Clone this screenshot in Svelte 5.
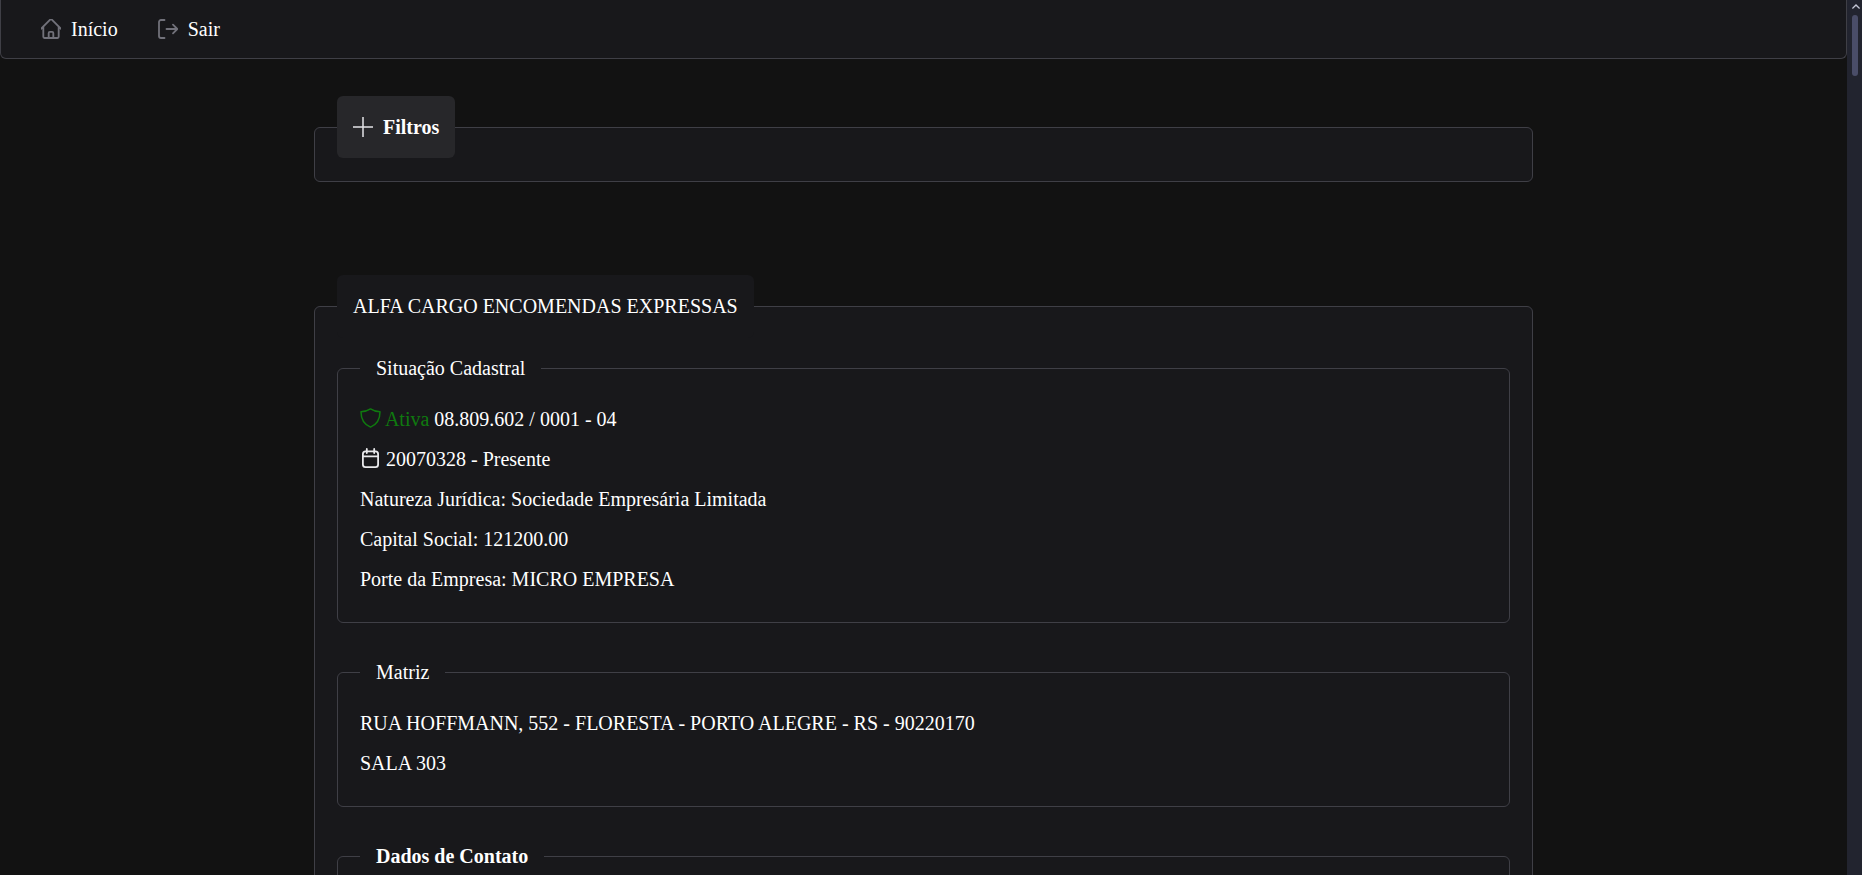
<script>
  const situacao = [
    'Natureza Jurídica: Sociedade Empresária Limitada',
    'Capital Social: 121200.00',
    'Porte da Empresa: MICRO EMPRESA'
  ];
</script>

<div class="page">
  <div class="view">
    <nav class="menubar">
      <a class="item" href="#inicio">
        <svg class="nav-icon" viewBox="2.25 2.700 19.500 19" fill="none" stroke="currentColor" stroke-width="1.800" stroke-linecap="round" stroke-linejoin="round"><path d="M2.25 12l8.954-8.955c.44-.439 1.152-.439 1.591 0L21.75 12M4.500 9.750v10.125c0 .621.504 1.125 1.125 1.125H9.750v-4.875c0-.621.504-1.125 1.125-1.125h2.250c.621 0 1.125.504 1.125 1.125V21h4.125c.621 0 1.125-.504 1.125-1.125V9.750M8.250 21h8.250"/></svg>
        <span>Início</span>
      </a>
      <a class="item" href="#sair">
        <svg class="nav-icon" viewBox="0 0 20 20" fill="none" stroke="currentColor" stroke-width="1.800" stroke-linecap="round" stroke-linejoin="round"><path d="M6.500 1H3a2 2 0 0 0-2 2v14a2 2 0 0 0 2 2h3.500M8.500 10H19.300M15 5.700l4.300 4.300-4.300 4.300"/></svg>
        <span>Sair</span>
      </a>
    </nav>

    <main class="content">
      <fieldset class="panel filters">
        <legend class="toggle">
          <svg class="plus" viewBox="0 0 20 20" fill="none" stroke="currentColor" stroke-width="1.500"><path d="M10 0v20M0 10h20"/></svg>
          <span class="toggle-label">Filtros</span>
        </legend>
      </fieldset>

      <fieldset class="panel company">
        <legend class="title">ALFA CARGO ENCOMENDAS EXPRESSAS</legend>

        <fieldset class="panel inner">
          <legend>Situação Cadastral</legend>
          <p>
            <svg class="row-icon shield" viewBox="0 0 21 20" fill="none" stroke="currentColor" stroke-width="1.500" stroke-linejoin="round"><path d="M10.500 .9c2.900 1.900 6 2.800 9.500 2.800 0 7.300-2.800 12.600-9.500 15.400C3.800 16.300 1 11 1 3.700 4.500 3.700 7.600 2.800 10.500 .9z"/></svg>
            <span class="ativa">Ativa</span> 08.809.602 / 0001 - 04
          </p>
          <p>
            <svg class="row-icon calendar" viewBox="0 0 21 20" fill="none" stroke="currentColor" stroke-width="1.800" stroke-linecap="round" stroke-linejoin="round"><rect x="2.900" y="3.400" width="15.200" height="15.700" rx="2.600"/><path d="M2.900 8.400h15.200M6.800 1v4M14.200 1v4"/></svg>
            20070328 - Presente
          </p>
          {#each situacao as line}
            <p>{line}</p>
          {/each}
        </fieldset>

        <fieldset class="panel inner">
          <legend>Matriz</legend>
          <p>RUA HOFFMANN, 552 - FLORESTA - PORTO ALEGRE - RS - 90220170</p>
          <p>SALA 303</p>
        </fieldset>

        <fieldset class="panel inner contact">
          <legend class="bold">Dados de Contato</legend>
        </fieldset>
      </fieldset>
    </main>
  </div>

  <aside class="scrollbar" aria-hidden="true">
    <svg class="arrow" viewBox="0 0 10 6"><path d="M5 0l5 5-1 1-4-3.500L1 6 0 5z" fill="#c3c6d6"/></svg>
    <div class="thumb"></div>
  </aside>
</div>

<style>
  :global(body) {
    margin: 0;
    background: #121212;
    color: #fff;
    font-family: "Liberation Serif", "Times New Roman", serif;
    font-size: 20px;
  }
  .page {
    display: flex;
    height: 875px;
    overflow: hidden;
  }
  .view {
    flex: 1;
    min-width: 0;
  }
  .menubar {
    display: flex;
    align-items: center;
    gap: 8px;
    box-sizing: border-box;
    width: 1847px;
    height: 59px;
    padding: 0 24px;
    background: #18181b;
    border: 1px solid #3f3f46;
    border-top: 0;
    border-radius: 0 0 6px 6px;
  }
  .item {
    display: flex;
    align-items: center;
    gap: 10px;
    padding: 12px 16px;
    color: #fff;
    text-decoration: none;
  }
  .nav-icon {
    display: block;
    width: 20px;
    height: 20px;
    color: #71717a;
  }
  .content {
    width: 1219px;
    margin-left: 314px;
  }
  .panel {
    margin: 0;
    min-width: 0;
    background: #18181b;
    border: 1px solid #3f3f46;
    border-radius: 6px;
    padding: 0 22px;
  }
  .filters {
    margin-top: 37px;
    height: 86px;
    box-sizing: border-box;
  }
  .toggle {
    display: flex;
    align-items: center;
    gap: 10px;
    box-sizing: border-box;
    height: 62px;
    padding: 0 16px;
    background: #27272a;
    border-radius: 6px;
    font-weight: 700;
  }
  .toggle-label {
    padding-top: 1px;
  }
  .plus {
    width: 20px;
    height: 20px;
    color: #e4e4e7;
  }
  .company {
    margin-top: 93px;
    padding-bottom: 40px;
  }
  .title {
    box-sizing: border-box;
    height: 63px;
    padding: 0 16px;
    background: #18181b;
    border-radius: 6px;
    line-height: 63px;
  }
  .inner {
    margin-top: 38px;
    padding-top: 28px;
    padding-bottom: 14px;
  }
  .title + .inner {
    margin-top: 19px;
  }
  .contact {
    min-height: 120px;
  }
  .inner legend {
    padding: 0 16px;
    line-height: 23px;
  }
  .inner .bold {
    font-weight: 700;
  }
  p {
    margin: 0 0 17px;
    line-height: 23px;
  }
  .ativa {
    color: #0f7a0f;
  }
  .row-icon {
    width: 21px;
    height: 20px;
    vertical-align: -2px;
  }
  .shield {
    color: #0f7a0f;
  }
  .calendar {
    color: #e9e9ec;
  }
  .scrollbar {
    position: relative;
    flex: none;
    width: 15px;
    background: #22242f;
  }
  .arrow {
    position: absolute;
    top: 4px;
    left: 5px;
    width: 8px;
    height: 5px;
  }
  .thumb {
    position: absolute;
    top: 15px;
    left: 5px;
    width: 6px;
    height: 61px;
    border-radius: 3px;
    background: #4a4d68;
  }
</style>
